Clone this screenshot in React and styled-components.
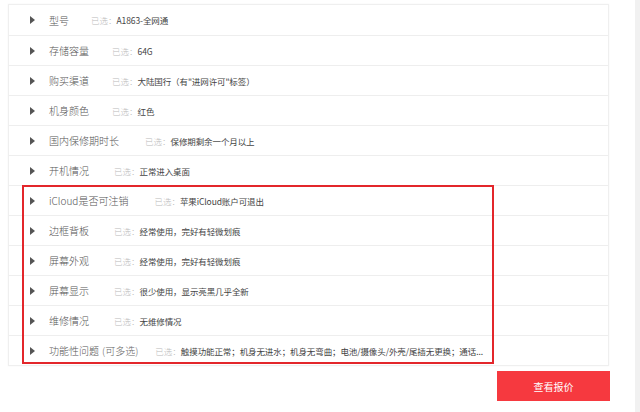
import React from "react";
import styled, { createGlobalStyle } from "styled-components";

const Global = createGlobalStyle`
  html, body { margin: 0; padding: 0; background: #fff; }
  body { font-family: "Noto Sans CJK SC", "Noto Sans", sans-serif; }
`;

const Page = styled.div`
  width: 640px;
  height: 412px;
  display: flex;
  background: #fff;
  overflow: hidden;
`;

const Main = styled.div`
  flex: 1;
  padding: 4px 26px 0 8px;
  position: relative;
`;

const Strip = styled.div`
  width: 5px;
  background: #f1f1f1;
`;

const List = styled.div`
  border: 1px solid #efefef;
  box-shadow: 0 0 2px rgba(0,0,0,0.04);
`;

const Row = styled.div`
  height: 30px;
  box-sizing: border-box;
  display: flex;
  align-items: center;
  padding-left: 21px;
  border-top: ${(p) => (p.$first ? "none" : "1px solid #eeeeee")};
  white-space: nowrap;
  overflow: hidden;
`;

const Arrow = styled.span`
  width: 0;
  height: 0;
  border-top: 4px solid transparent;
  border-bottom: 4px solid transparent;
  border-left: 5px solid #555;
  margin-right: 14px;
  flex: none;
`;

const Label = styled.span`
  font-size: 10px;
  font-weight: 300;
  color: #555;
  margin-right: ${(p) => p.$gap}px;
`;

const Extra = styled.span`
  color: #666;
  margin-left: 3px;
`;

const Picked = styled.span`
  font-size: 8.5px;
  font-weight: 300;
  color: #bbb;
`;

const Value = styled.span`
  font-size: 8.5px;
  color: #444;
  letter-spacing: -0.1px;
`;

const Highlight = styled.div`
  position: absolute;
  left: 22px;
  top: 185px;
  width: 472px;
  height: 179px;
  box-sizing: border-box;
  border: 2px solid #e3262b;
  pointer-events: none;
`;

const Footer = styled.div`
  display: flex;
  justify-content: flex-end;
  margin-top: 5px;
  margin-right: -1px;
`;

const Button = styled.button`
  width: 113px;
  height: 30px;
  border: none;
  background: #f6393f;
  color: #fff;
  font-family: "Noto Sans CJK SC", sans-serif;
  font-size: 10px;
  cursor: pointer;
`;

const rows = [
  { label: "型号", value: "A1863-全网通", gap: 22 },
  { label: "存储容量", value: "64G", gap: 23 },
  { label: "购买渠道", value: "大陆国行（有\"进网许可\"标签）", gap: 23 },
  { label: "机身颜色", value: "红色", gap: 23 },
  { label: "国内保修期时长", value: "保修期剩余一个月以上", gap: 26 },
  { label: "开机情况", value: "正常进入桌面", gap: 25 },
  { label: "iCloud是否可注销", value: "苹果iCloud账户可退出", gap: 26 },
  { label: "边框背板", value: "经常使用，完好有轻微划痕", gap: 25 },
  { label: "屏幕外观", value: "经常使用，完好有轻微划痕", gap: 25 },
  { label: "屏幕显示", value: "很少使用，显示亮黑几乎全新", gap: 25 },
  { label: "维修情况", value: "无维修情况", gap: 25 },
  {
    label: "功能性问题",
    extra: "(可多选)",
    value: "触摸功能正常；机身无进水；机身无弯曲；电池/摄像头/外壳/尾插无更换；通话...",
    gap: 17,
  },
];

export default function App() {
  return (
    <>
      <Global />
      <Page>
        <Main>
          <List>
            {rows.map((r, i) => (
              <Row key={i} $first={i === 0}>
                <Arrow />
                <Label $gap={r.gap}>
                  {r.label}
                  {r.extra && <Extra>{r.extra}</Extra>}
                </Label>
                <Picked>已选：</Picked>
                <Value>{r.value}</Value>
              </Row>
            ))}
          </List>
          <Footer>
            <Button>查看报价</Button>
          </Footer>
          <Highlight />
        </Main>
        <Strip />
      </Page>
    </>
  );
}
